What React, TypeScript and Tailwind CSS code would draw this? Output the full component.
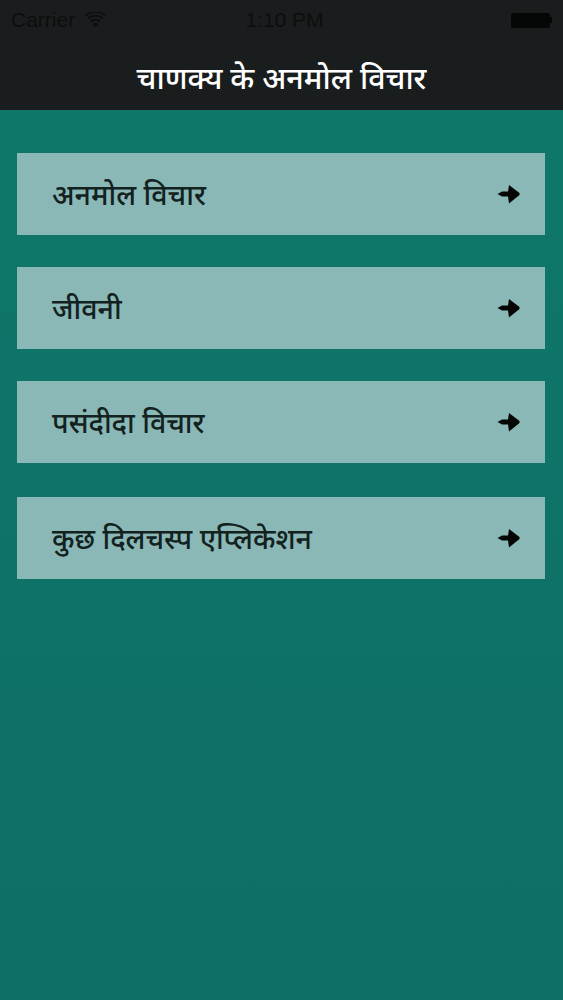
const rows = [
  { label: "अनमोल विचार", mt: "mt-[43px]" },
  { label: "जीवनी", mt: "mt-[32px]" },
  { label: "पसंदीदा विचार", mt: "mt-[32px]" },
  { label: "कुछ दिलचस्प एप्लिकेशन", mt: "mt-[34px]" },
];

function Arrow() {
  return (
    <svg width="23" height="20" viewBox="0 0 23 20" className="shrink-0">
      <path d="M0.5 10 L5 7.5 H11 L12 1 L22.5 9 V11 L12 19.5 L11 12.5 H5 Z" fill="#060606" />
    </svg>
  );
}

function WifiGlyph() {
  return (
    <svg width="21" height="16" viewBox="0 0 21 16" className="shrink-0">
      <path d="M10.5 15.5 L7.6 11.9 A4.8 4.8 0 0 1 13.4 11.9 Z" fill="#0c0e0e" />
      <path d="M5.6 9.5 A7.8 7.8 0 0 1 15.4 9.5 M3 6.3 A11.8 11.8 0 0 1 18 6.3 M0.8 3.4 A15 15 0 0 1 20.2 3.4" fill="none" stroke="#0c0e0e" strokeWidth="1.9" />
    </svg>
  );
}

export default function App() {
  return (
    <div
      className="w-[563px] h-[1000px] overflow-hidden bg-gradient-to-b from-[#0f786a] to-[#0e6e68]"
      style={{ fontFamily: '"Noto Sans", "Liberation Sans", sans-serif' }}
    >
      <div className="h-[110px] bg-[#1a1d1d] flex flex-col">
        <div className="h-[40px] flex items-center justify-between pl-[11px] pr-[11px] text-[#0c0e0e] text-[21px]" style={{ fontFamily: '"Liberation Sans", sans-serif' }}>
          <div className="w-[126px] flex items-center gap-[10px]">
            <span>Carrier</span>
            <WifiGlyph />
          </div>
          <span>1:10 PM</span>
          <div className="w-[120px] flex justify-end items-center">
            <div className="w-[39px] h-[15px] rounded-[2px] bg-[#050606]" />
            <div className="w-[2px] h-[6px] bg-[#050606]" />
          </div>
        </div>
        <div className="mt-[17px] text-center text-white text-[30.5px] font-medium leading-[40px]">चाणक्य के अनमोल विचार</div>
      </div>
      <div className="pl-[17px] pr-[18px] flex flex-col">
        {rows.map((r) => (
          <div key={r.label} className={`${r.mt} h-[82px] bg-[#8ab8b6] flex items-center justify-between pl-[35px] pr-[25px]`}>
            <span className="text-[28.6px] font-medium text-[#13211f]">{r.label}</span>
            <Arrow />
          </div>
        ))}
      </div>
    </div>
  );
}
